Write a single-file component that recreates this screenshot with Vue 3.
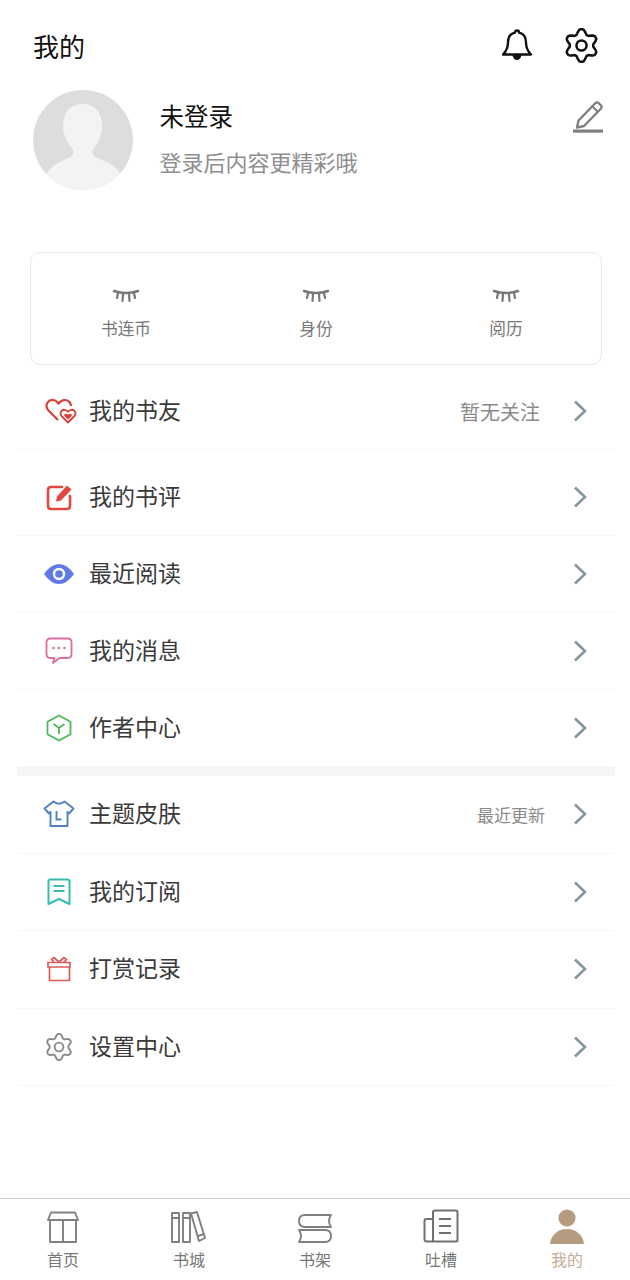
<script setup>
const stats = [
  { label: '书连币' },
  { label: '身份' },
  { label: '阅历' },
]

const groupOne = [
  { name: '我的书评', icon: 'review' },
  { name: '最近阅读', icon: 'eye' },
  { name: '我的消息', icon: 'msg' },
  { name: '作者中心', icon: 'box' },
]

const groupTwo = [
  { name: '主题皮肤', icon: 'shirt', note: '最近更新' },
  { name: '我的订阅', icon: 'mark' },
  { name: '打赏记录', icon: 'gift' },
  { name: '设置中心', icon: 'gear' },
]

const tabs = [
  { name: '首页', icon: 'home' },
  { name: '书城', icon: 'city' },
  { name: '书架', icon: 'shelf' },
  { name: '吐槽', icon: 'news' },
  { name: '我的', icon: 'me', active: true },
]

// six rounded lobes, one pointing straight up
function gearOutline() {
  const pts = []
  for (let deg = 0; deg < 360; deg += 4) {
    const a = (deg * Math.PI) / 180
    const wave = Math.max(-1, Math.min(1, 1.15 * Math.cos(6 * a)))
    const r = 12.8 + 2.1 * wave
    const x = 16 + r * Math.sin(a)
    const y = 16 - r * Math.cos(a)
    pts.push(x.toFixed(2) + ' ' + y.toFixed(2))
  }
  return 'M' + pts.join(' L') + ' Z'
}
const gearPath = gearOutline()
</script>

<template>
  <div class="page">
    <header class="top">
      <span class="title">我的</span>
      <div class="top-icons">
        <svg class="bell" width="32" height="34" viewBox="0 0 32 34">
          <path d="M16 2.5 C17.4 2.5 18 3.4 18 4.6 C23 5.6 25 9.5 25 14.5 C25 20 26.5 23 30 26.5 L2 26.5 C5.5 23 7 20 7 14.5 C7 9.5 9 5.6 14 4.6 C14 3.4 14.6 2.5 16 2.5 Z" fill="none" stroke="#111" stroke-width="2.4" stroke-linejoin="round" />
          <path d="M11.5 27 L20.5 27 C20 30.5 18 32 16 32 C14 32 12 30.5 11.5 27 Z" fill="#111" />
        </svg>
        <svg class="cog" width="35" height="35" viewBox="0 0 32 32">
          <path :d="gearPath" fill="none" stroke="#111" stroke-width="2.3" stroke-linejoin="round" />
          <circle cx="16" cy="16" r="4.6" fill="none" stroke="#111" stroke-width="2.3" />
        </svg>
      </div>
    </header>

    <section class="profile">
      <svg class="avatar" width="100" height="100" viewBox="0 0 100 100">
        <defs>
          <clipPath id="avatar-clip"><circle cx="50" cy="50" r="50" /></clipPath>
        </defs>
        <circle cx="50" cy="50" r="50" fill="#dddddd" />
        <g clip-path="url(#avatar-clip)">
          <path d="M50 14 C37 14 30 22 30 36 C30 46 36 54 40 60 C42 65 38 67 33 69 C26 72 18 76 14 83 L14 104 L87 104 L87 83 C83 76 74 72 67 69 C62 67 58 65 60 60 C64 54 69 46 69 36 C69 22 62 14 50 14 Z" fill="#f3f3f3" />
        </g>
      </svg>
      <div class="who">
        <div class="who-name">未登录</div>
        <div class="who-sub">登录后内容更精彩哦</div>
      </div>
      <svg class="pen" width="32" height="32" viewBox="0 0 32 32">
        <path d="M23.5 2 Q25 1 26.5 2 L29 4.5 Q30 6 29 7.5 L12 25 L5 26.5 L6.5 19.5 Z" fill="none" stroke="#808080" stroke-width="2.4" stroke-linejoin="round" />
        <path d="M20.5 5.5 L25.5 10.5" stroke="#808080" stroke-width="2.2" />
        <rect x="1" y="28.5" width="30" height="3.2" fill="#808080" />
      </svg>
    </section>

    <section class="stats">
      <div v-for="s in stats" :key="s.label" class="stat">
        <svg width="28" height="14" viewBox="0 0 28 14">
          <path d="M2 2 Q14 6 26 2" fill="none" stroke="#777" stroke-width="2.4" stroke-linecap="round" />
          <path d="M6 4 L5 9 M11 5 L10.5 12 M17 5 L17.5 12 M22 4 L23 9" fill="none" stroke="#777" stroke-width="2.2" stroke-linecap="round" />
        </svg>
        <span class="stat-label">{{ s.label }}</span>
      </div>
    </section>

    <section class="list first">
      <div class="row">
        <span class="row-icon">
          <svg width="32" height="26" viewBox="-2 0 32 26">
            <path d="M13 22 L3 12 C-1 6 4 1.5 8 2 C10.5 2.2 12 3.5 13.5 5.5 C15 3.5 17 2.2 19.5 2 C23 1.8 26 4.5 26 8" fill="none" stroke="#d9403a" stroke-width="2.2" stroke-linejoin="round" />
            <path d="M23 24.5 L16.5 18 C14 14.5 17 11.5 19.5 11.8 C21 12 22.2 12.6 23 13.8 C23.8 12.6 25 12 26.5 11.8 C29 11.5 32 14.5 29.5 18 Z" fill="#fff" stroke="#d9403a" stroke-width="1.8" stroke-linejoin="round" />
            <path d="M23 21.5 L19.5 18 C18.2 16 20.5 14.8 23 16.8 C25.5 14.8 27.8 16 26.5 18 Z" fill="#d9403a" />
          </svg>
        </span>
        <span class="row-name">我的书友</span>
        <span class="row-note big">暂无关注</span>
        <svg class="chev" width="14" height="22" viewBox="0 0 14 22"><path d="M2 1.5 L12 11 L2 20.5" fill="none" stroke="#8497a0" stroke-width="2.6" /></svg>
      </div>
    </section>

    <section class="list second">
      <div v-for="item in groupOne" :key="item.name" class="row">
        <span class="row-icon">
          <svg v-if="item.icon === 'review'" width="28" height="28" viewBox="0 0 28 28">
            <path d="M17 4 L6 4 Q3 4 3 7 L3 23 Q3 26 6 26 L22 26 Q25 26 25 23 L25 13" fill="none" stroke="#e2483f" stroke-width="2.6" stroke-linecap="round" />
            <path d="M11 18.5 L12 13.5 L22 2.5 L26.5 6.5 L16 17.5 Z" fill="#e2483f" />
          </svg>
          <svg v-else-if="item.icon === 'eye'" width="30" height="20" viewBox="0 0 30 20">
            <path d="M0 10 Q7 0 15 0 Q23 0 30 10 Q23 20 15 20 Q7 20 0 10 Z" fill="#6079e6" />
            <circle cx="15" cy="10" r="6.2" fill="#fff" />
            <circle cx="15" cy="10" r="3.8" fill="#6079e6" />
          </svg>
          <svg v-else-if="item.icon === 'msg'" width="28" height="28" viewBox="0 0 28 28">
            <path d="M5.5 1.5 L22.5 1.5 Q26.5 1.5 26.5 5.5 L26.5 17 Q26.5 21 22.5 21 L14.5 21 L8 26 L9.5 21 L5.5 21 Q1.5 21 1.5 17 L1.5 5.5 Q1.5 1.5 5.5 1.5 Z" fill="none" stroke="#dd6f9d" stroke-width="1.8" stroke-linejoin="round" />
            <circle cx="8.5" cy="11" r="1.3" fill="#dd6f9d" />
            <circle cx="14" cy="11" r="1.3" fill="#dd6f9d" />
            <circle cx="19.5" cy="11" r="1.3" fill="#dd6f9d" />
          </svg>
          <svg v-else width="26" height="28" viewBox="0 0 26 28">
            <path d="M13 1.5 L24.5 7.7 L24.5 20.3 L13 26.5 L1.5 20.3 L1.5 7.7 Z" fill="none" stroke="#4cb958" stroke-width="1.8" stroke-linejoin="round" />
            <path d="M7.5 10 L13 14 L18.5 10 M13 14 L13 20" fill="none" stroke="#4cb958" stroke-width="1.8" />
          </svg>
        </span>
        <span class="row-name">{{ item.name }}</span>
        <svg class="chev" width="14" height="22" viewBox="0 0 14 22"><path d="M2 1.5 L12 11 L2 20.5" fill="none" stroke="#8497a0" stroke-width="2.6" /></svg>
      </div>
    </section>

    <div class="band"></div>

    <section class="list">
      <div v-for="item in groupTwo" :key="item.name" class="row tall">
        <span class="row-icon">
          <svg v-if="item.icon === 'shirt'" width="32" height="28" viewBox="0 0 32 28">
            <path d="M10.5 1.5 Q16 6 21.5 1.5 L30.5 8.5 L26 13.5 L24.5 12 L24.5 26 L7.5 26 L7.5 12 L6 13.5 L1.5 8.5 Z" fill="none" stroke="#4f7fc4" stroke-width="1.9" stroke-linejoin="round" />
            <path d="M13.5 11 L13.5 19.5 L18.5 19.5" fill="none" stroke="#4f7fc4" stroke-width="1.9" />
          </svg>
          <svg v-else-if="item.icon === 'mark'" width="24" height="28" viewBox="0 0 24 28">
            <path d="M3.5 1.5 L20.5 1.5 Q22.5 1.5 22.5 3.5 L22.5 26 L12 21 L1.5 26 L1.5 3.5 Q1.5 1.5 3.5 1.5 Z" fill="none" stroke="#35bdb0" stroke-width="2" stroke-linejoin="round" />
            <path d="M6.5 8 L17.5 8 M6.5 13 L17.5 13" fill="none" stroke="#35bdb0" stroke-width="2" />
          </svg>
          <svg v-else-if="item.icon === 'gift'" width="24" height="26" viewBox="0 0 24 26">
            <path d="M2.5 11 L2.5 24.5 L22.5 24.5 L22.5 11 M1 6.5 L23 6.5 L23 11 L1 11 Z" fill="none" stroke="#d95b58" stroke-width="1.7" />
            <path d="M12 6 L7 1.5 L4.5 3.5 L7 6 M12 6 L17 1.5 L19.5 3.5 L17 6" fill="none" stroke="#d95b58" stroke-width="1.7" />
          </svg>
          <svg v-else width="28" height="28" viewBox="0 0 32 32">
            <path :d="gearPath" fill="none" stroke="#8a8a8a" stroke-width="2.2" stroke-linejoin="round" />
            <circle cx="16" cy="16" r="5" fill="none" stroke="#8a8a8a" stroke-width="2.2" />
          </svg>
        </span>
        <span class="row-name">{{ item.name }}</span>
        <span v-if="item.note" class="row-note small">{{ item.note }}</span>
        <svg class="chev" width="14" height="22" viewBox="0 0 14 22"><path d="M2 1.5 L12 11 L2 20.5" fill="none" stroke="#8497a0" stroke-width="2.6" /></svg>
      </div>
    </section>

    <nav class="tabbar">
      <div v-for="t in tabs" :key="t.name" class="tab" :class="{ on: t.active }">
        <svg v-if="t.icon === 'home'" class="lift" width="32" height="32" viewBox="0 0 32 32">
          <path d="M4 1.5 L28 1.5 L31 9 L1 9 Z M3 9 L3 31 L29 31 L29 9 M16 9 L16 31" fill="none" stroke="#808080" stroke-width="1.9" stroke-linejoin="round" />
        </svg>
        <svg v-else-if="t.icon === 'city'" class="lift" width="36" height="32" viewBox="0 0 36 32">
          <path d="M1 2 L8 2 L8 31 L1 31 Z M1 7 L8 7 M12 2 L19 2 L19 31 L12 31 Z M12 7 L19 7 M20 2.5 L26 1 L34 27 L28 30 Z" fill="none" stroke="#808080" stroke-width="1.9" stroke-linejoin="round" />
          <path d="M27 25 L33 23" stroke="#808080" stroke-width="1.9" />
        </svg>
        <svg v-else-if="t.icon === 'shelf'" class="lift" width="36" height="30" viewBox="0 0 36 30">
          <path d="M34 2 L8 2 Q2 2 2 8 Q2 14 8 14 L34 14 Q30 8 34 2 Z M2 17 L28 17 Q34 17 34 23 Q34 29 28 29 L2 29 Q6 23 2 17 Z" fill="none" stroke="#808080" stroke-width="1.9" stroke-linejoin="round" />
        </svg>
        <svg v-else-if="t.icon === 'news'" class="lift" width="36" height="34" viewBox="0 0 36 34">
          <path d="M10 3 Q10 1.5 12 1.5 L33 1.5 Q34.5 1.5 34.5 3 L34.5 31 Q34.5 32.5 33 32.5 L4 32.5 Q1.5 32.5 1.5 30 L1.5 12 Q1.5 10 3.5 10 L10 10 M10 3 L10 32" fill="none" stroke="#707070" stroke-width="2" />
          <path d="M16 10 L28 10 M16 17 L28 17 M16 24 L28 24" stroke="#707070" stroke-width="2" />
        </svg>
        <svg v-else width="36" height="36" viewBox="0 0 36 36">
          <circle cx="18" cy="9" r="8.6" fill="#b59b80" />
          <path d="M1 35 C2 26 9 20 18 20 C27 20 34 26 35 35 Z" fill="#b59b80" />
        </svg>
        <span class="tab-name">{{ t.name }}</span>
      </div>
    </nav>
  </div>
</template>

<style scoped>
.page {
  height: 1280px;
  width: 630px;
  display: flex;
  flex-direction: column;
  background: #fff;
  font-family: "Noto Sans CJK SC", "Noto Sans", sans-serif;
  overflow: hidden;
}
.top {
  display: flex;
  justify-content: space-between;
  align-items: center;
  height: 34px;
  margin-top: 28px;
  padding: 0 31px 0 33px;
}
.title {
  font-size: 26px;
  color: #111;
}
.top-icons {
  display: flex;
  align-items: center;
  gap: 31px;
}
.profile {
  display: flex;
  align-items: flex-start;
  margin-top: 28px;
  padding: 0 26px 0 33px;
}
.who {
  flex: 1;
  margin-left: 26.5px;
  padding-top: 8px;
}
.who-name {
  font-size: 24.5px;
  line-height: 36px;
  color: #111;
}
.who-sub {
  margin-top: 10px;
  font-size: 22px;
  line-height: 34px;
  color: #8e8e8e;
}
.pen {
  margin-top: 11px;
}
.stats {
  display: grid;
  grid-template-columns: repeat(3, 1fr);
  height: 113px;
  margin: 62px 28px 0 30px;
  border: 1px solid #e8e8e8;
  border-radius: 10px;
  box-sizing: border-box;
}
.stat {
  display: flex;
  flex-direction: column;
  align-items: center;
  padding-top: 36px;
}
.stat-label {
  margin-top: 13px;
  font-size: 16.7px;
  line-height: 24px;
  color: #777;
}
.list {
  margin: 0 15px 0 17px;
}
.first {
  margin-top: 8px;
}
.second {
  margin-top: 9px;
}
.row {
  display: flex;
  align-items: center;
  height: 77px;
  box-sizing: border-box;
  border-bottom: 1px solid #f7f7f7;
  padding: 0 28px 0 27px;
}
.tall {
  height: 77.5px;
}
.row-icon {
  width: 30px;
  height: 32px;
  display: flex;
  align-items: center;
  justify-content: center;
  margin-right: 15px;
}
.row-icon svg {
  overflow: visible;
}
.row-name {
  flex: 1;
  font-size: 23px;
  line-height: 30px;
  padding-bottom: 4px;
  color: #3a3a3a;
}
.row-note {
  color: #8a8a8a;
}
.big {
  font-size: 20px;
  margin-right: 33px;
}
.small {
  font-size: 17px;
  margin-right: 28px;
}
.band {
  height: 9px;
  margin: 0 15px 0 17px;
  background: #f5f5f5;
}
.tabbar {
  margin-top: auto;
  height: 82px;
  display: grid;
  grid-template-columns: repeat(5, 1fr);
  border-top: 1px solid #cccccc;
  box-sizing: border-box;
}
.tab {
  display: flex;
  flex-direction: column;
  align-items: center;
  justify-content: flex-end;
  padding-bottom: 9px;
}
.lift {
  margin-bottom: 2px;
}
.tab-name {
  font-size: 16px;
  line-height: 24px;
  margin-top: 2px;
  color: #777;
}
.on .tab-name {
  color: #c4ad94;
}
</style>
